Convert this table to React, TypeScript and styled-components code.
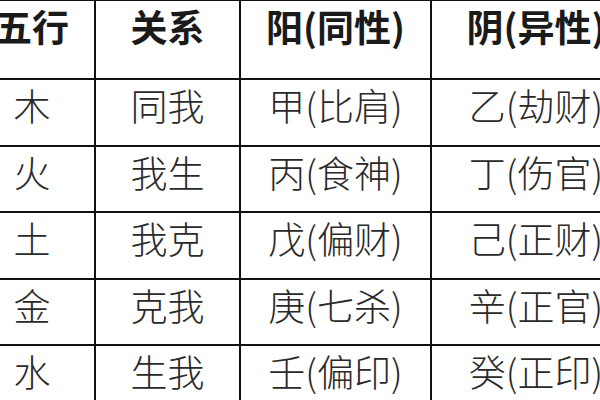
import React from 'react';
import styled, {createGlobalStyle} from 'styled-components';

const GlobalStyle = createGlobalStyle`
    html, body {
        margin: 0;
        padding: 0;
        background: #ffffff;
    }
`;

const Viewport = styled.div`
    width: 600px;
    height: 400px;
    overflow: hidden;
    background: #ffffff;
`;

// black background shows through the gaps as the table rules
const Table = styled.div`
    display: grid;
    grid-template-columns: 124px 143px 189px 208px;
    grid-template-rows: 77px repeat(6, 64.5px);
    gap: 2px;
    padding-top: 1px;
    margin-left: -30px;
    width: 676px;
    background: #111111;
    font-family: "Noto Sans CJK SC", "Noto Sans", sans-serif;
`;

interface CellProps {
    header?: boolean;
}

const Cell = styled.div<CellProps>`
    background: #ffffff;
    text-align: center;
    font-size: 37px;
    line-height: 50px;
    white-space: nowrap;
    color: ${(props) => (props.header ? '#1a1a1a' : '#2a2a2a')};
    font-weight: ${(props) => (props.header ? 700 : 300)};
    padding-top: 0;
`;

const header = ['五行', '关系', '阳(同性)', '阴(异性)'];

const rows = [
    ['木', '同我', '甲(比肩)', '乙(劫财)'],
    ['火', '我生', '丙(食神)', '丁(伤官)'],
    ['土', '我克', '戊(偏财)', '己(正财)'],
    ['金', '克我', '庚(七杀)', '辛(正官)'],
    ['水', '生我', '壬(偏印)', '癸(正印)'],
    ['', '', '', ''],
];

const App = () => {
    return (
        <Viewport>
            <GlobalStyle/>
            <Table>
                {header.map((text) => (
                    <Cell
                        key={text}
                        header={true}
                    >
                        {text}
                    </Cell>
                ))}
                {rows.map((row, r) => row.map((text, c) => (
                    <Cell key={`${r}-${c}`}>{text}</Cell>
                )))}
            </Table>
        </Viewport>
    );
};

export default App;
